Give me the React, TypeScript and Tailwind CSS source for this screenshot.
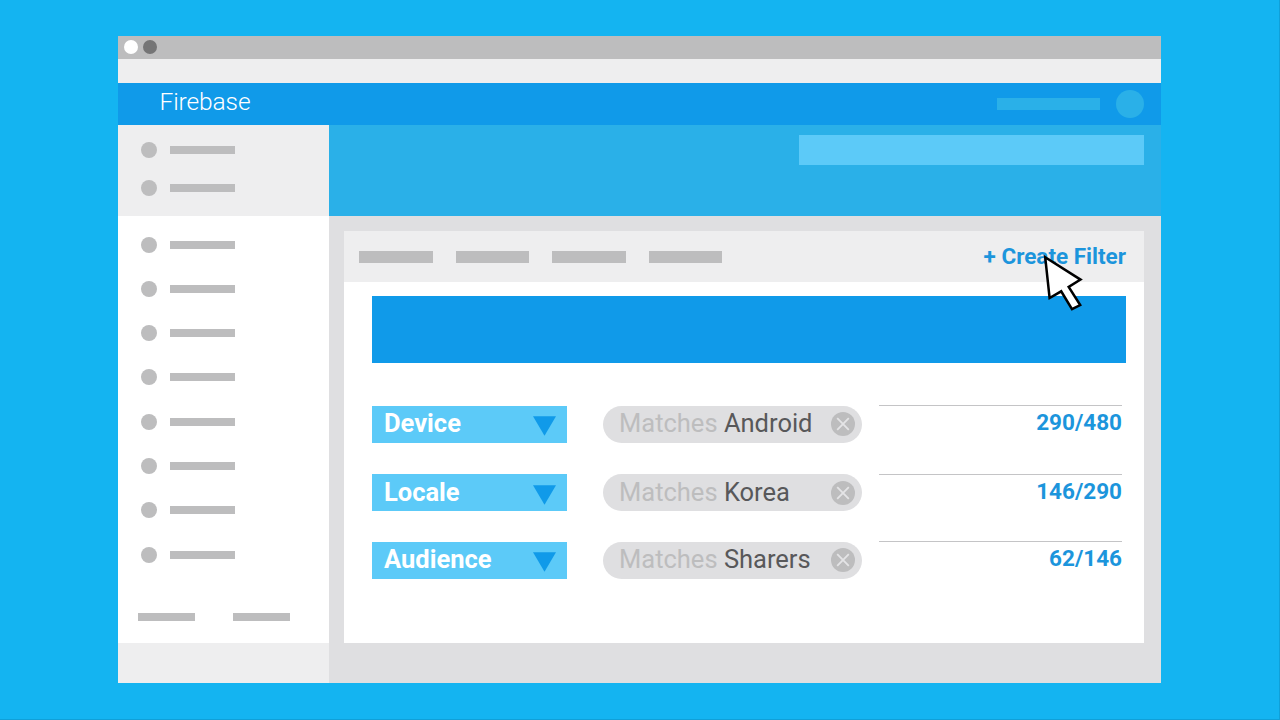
const NAV_TOP = [0, 1];
const NAV_MAIN = [0, 1, 2, 3, 4, 5, 6, 7];

const FILTERS = [
  { name: 'Device', value: 'Android', count: '290/480', label: 'leading-[34px]', match: 'leading-[35px]', rule: '-mt-px', total: 'leading-[33px]', arrow: 'mt-[10px]', close: 'mt-[6px]' },
  { name: 'Locale', value: 'Korea', count: '146/290', label: 'leading-[37px]', match: 'leading-[36px]', rule: 'mt-0', total: 'leading-[32px]', arrow: 'mt-[11px]', close: 'mt-[7px]' },
  { name: 'Audience', value: 'Sharers', count: '62/146', label: 'leading-[34px]', match: 'leading-[35px]', rule: '-mt-px', total: 'leading-[32px]', arrow: 'mt-[10px]', close: 'mt-[6px]' },
];

function NavItem() {
  return (
    <div className="flex h-4 items-center">
      <div className="size-4 rounded-full bg-[#bdbdbe]" />
      <div className="ml-[13px] h-2 w-[65px] bg-[#bdbdbe]" />
    </div>
  );
}

function Sidebar() {
  return (
    <aside className="flex w-[211px] shrink-0 flex-col">
      <div className="flex h-[91px] flex-col gap-[22px] bg-[#eeeeef] pt-[17px] pl-[23px]">
        {NAV_TOP.map((i) => (
          <NavItem key={i} />
        ))}
      </div>
      <div className="flex h-[427px] flex-col bg-white pt-[20.6px]">
        <div className="flex h-[326px] flex-col justify-between pl-[23px]">
          {NAV_MAIN.map((i) => (
            <NavItem key={i} />
          ))}
        </div>
        <div className="mt-[50px] flex gap-[38px] pl-5">
          <div className="h-2 w-[57px] bg-[#bdbdbe]" />
          <div className="h-2 w-[57px] bg-[#bdbdbe]" />
        </div>
      </div>
      <div className="flex-1 bg-[#eeeeef]" />
    </aside>
  );
}

function FilterRow({ filter }: { filter: (typeof FILTERS)[number] }) {
  return (
    <div className="flex h-[68px] items-start">
      <div className="flex h-[37px] w-[195px] justify-between bg-[#5ccaf8] pr-[11px] pl-3">
        <span className={`text-[25.5px] font-bold text-white ${filter.label}`}>{filter.name}</span>
        <svg className={`h-[20px] w-[23px] ${filter.arrow}`} viewBox="0 0 23 20">
          <path d="M0 0.3H23L11.5 19.8Z" fill="#109ae9" />
        </svg>
      </div>
      <div className="ml-9 flex h-[37px] w-[259px] justify-between rounded-full bg-[#dfdfe1] pr-[7px] pl-4">
        <span className={`text-[25.5px] whitespace-nowrap text-[#bdbdbe] ${filter.match}`}>
          Matches <span className="text-[#58585a]">{filter.value}</span>
        </span>
        <svg className={`size-6 shrink-0 ${filter.close}`} viewBox="0 0 24 24">
          <circle cx="12" cy="12" r="12" fill="#bdbdbe" />
          <path d="M6.2 6.2L17.8 17.8M17.8 6.2L6.2 17.8" stroke="#e4e4e6" strokeWidth="1.8" />
        </svg>
      </div>
      <div className={`ml-[17px] w-[243px] border-t border-[#c4c4c6] text-right ${filter.rule}`}>
        <span className={`block text-[22.5px] font-bold text-[#1c95dc] ${filter.total}`}>{filter.count}</span>
      </div>
    </div>
  );
}

function Cursor() {
  return (
    <svg className="absolute top-[250px] left-[1040px] h-[66px] w-[48px]" viewBox="1040 250 48 66">
      <path
        d="M1045.2 257.2L1080.5 279.6L1068.7 287L1080.2 305L1072 309.2L1061.2 291.3L1049.6 298Z"
        fill="#fff"
        stroke="#000"
        strokeWidth="2.5"
      />
    </svg>
  );
}

export default function App() {
  return (
    <div className="relative h-[720px] w-[1280px] overflow-hidden border-r border-b border-[#10a0d8] bg-[#14b4f1] pt-9 pl-[118px] font-[Roboto,sans-serif]">
      <div className="flex h-[647px] w-[1043px] flex-col">
        <div className="flex h-[23px] shrink-0 items-start gap-[5px] bg-[#bdbdbe] pt-[3.5px] pl-[6px]">
          <div className="size-[14px] rounded-full bg-white" />
          <div className="size-[14px] rounded-full bg-[#757576]" />
        </div>
        <div className="h-6 shrink-0 bg-[#eeeeef]" />
        <header className="flex h-[42px] shrink-0 items-center justify-between bg-[#109ae9] pr-[17px] pl-[41.5px]">
          <span className="-mt-[4px] text-[24.5px] leading-8 font-light tracking-[-0.1px] text-white">Firebase</span>
          <div className="flex items-center gap-4">
            <div className="h-3 w-[103px] bg-[#2ab0e8]" />
            <div className="size-7 rounded-full bg-[#2ab0e8]" />
          </div>
        </header>
        <div className="flex flex-1">
          <Sidebar />
          <main className="flex flex-1 flex-col bg-[#dfdfe1]">
            <div className="flex h-[91px] shrink-0 justify-end bg-[#2ab0e8] pt-[10px] pr-[17px]">
              <div className="h-[30px] w-[345px] bg-[#5ccaf8]" />
            </div>
            <section className="mt-[15px] ml-[15px] flex h-[412px] w-[800px] flex-col bg-white">
              <div className="flex h-[51px] items-center justify-between bg-[#eeeeef] pr-[18px] pl-[15px]">
                <div className="flex gap-[23px]">
                  <div className="h-3 w-[73.5px] bg-[#bdbdbe]" />
                  <div className="h-3 w-[73.5px] bg-[#bdbdbe]" />
                  <div className="h-3 w-[73.5px] bg-[#bdbdbe]" />
                  <div className="h-3 w-[73.5px] bg-[#bdbdbe]" />
                </div>
                <span className="-mt-[2px] text-[22.5px] leading-8 font-bold text-[#1c95dc]">+ Create Filter</span>
              </div>
              <div className="flex flex-col pt-[14px] pl-7">
                <div className="mb-[43px] h-[67px] w-[754px] bg-[#109ae9]" />
                {FILTERS.map((filter) => (
                  <FilterRow key={filter.name} filter={filter} />
                ))}
              </div>
            </section>
          </main>
        </div>
      </div>
      <Cursor />
    </div>
  );
}
